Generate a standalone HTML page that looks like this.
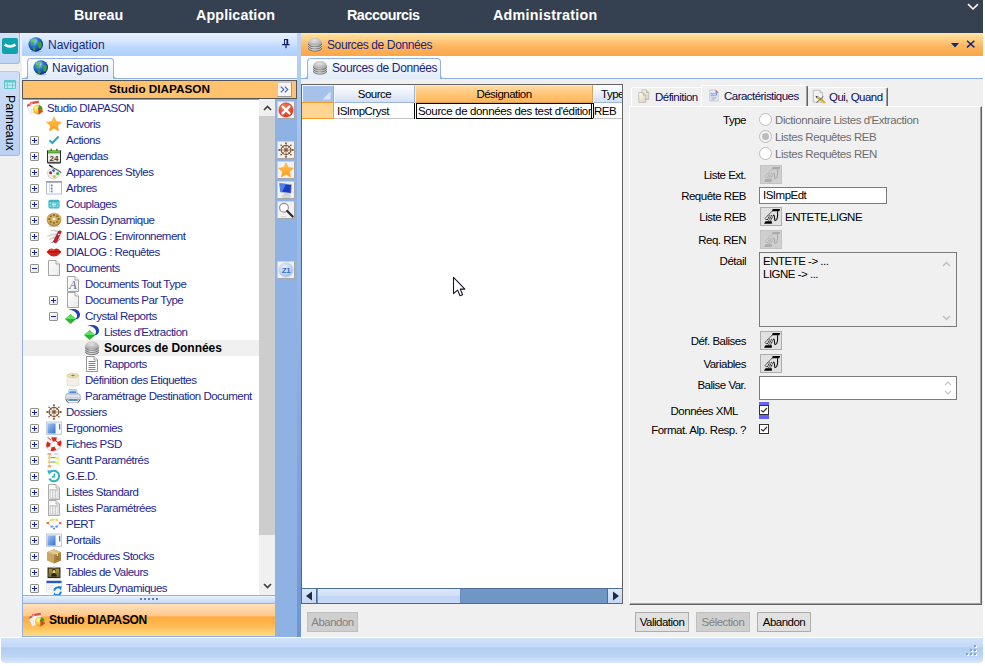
<!DOCTYPE html>
<html>
<head>
<meta charset="utf-8">
<title>Sources de Données</title>
<style>
*{box-sizing:border-box;margin:0;padding:0}
html,body{width:985px;height:666px;overflow:hidden;background:#fff;font-family:"Liberation Sans",sans-serif;font-size:11.5px;color:#000;letter-spacing:-.5px}
.abs{position:absolute}
svg{overflow:visible}
#win{left:0;top:0;width:983px;height:637px;background:#f0f0f0;overflow:hidden}
#top{left:0;top:0;width:983px;height:33px;background:#354050}
#top .m{position:absolute;top:6px;color:#fff;font-weight:bold;font-size:14.3px;line-height:18px;white-space:nowrap;letter-spacing:0}
#ls1{left:0;top:33px;width:20px;height:31px;background:linear-gradient(#d3e2f9,#bcd3f4);border-right:1px solid #a9bbd6;border-bottom:1px solid #a9bbd6;border-radius:0 0 3px 0}
#ls2{left:0;top:71px;width:20px;height:85px;background:linear-gradient(#cfe0f8,#b9d1f3);border-right:1px solid #a9bbd6;border-top:1px solid #b9c9e0;border-bottom:1px solid #a9bbd6;border-radius:0 3px 3px 0}
#pan{left:-17.5px;top:114px;width:54px;height:16px;transform:rotate(90deg);font-size:12.4px;line-height:16px;color:#000;white-space:nowrap;letter-spacing:0}
#navhead{left:22px;top:33px;width:275px;height:23px;background:linear-gradient(#e8f1ff 0%,#d6e6fd 35%,#bdd8fd 62%,#afd0fe 100%)}
.ttl{position:absolute;font-size:12px;color:#15287d;white-space:nowrap;line-height:16px;letter-spacing:-.38px}
#navtabs{left:22px;top:56px;width:275px;height:23px;background:#fff;border-bottom:1px solid #8fb0e8}
.tab{position:absolute;top:2px;height:21px;border:1px solid #8fb0e8;border-bottom:none;border-radius:4px 4px 0 0;background:linear-gradient(#fcfdff,#e1ebfa)}
.fl,.fr{position:absolute;bottom:0;width:4px;height:4px;border-bottom:1px solid #8fb0e8}.fl{left:-4px;border-right:1px solid #8fb0e8;border-bottom-right-radius:4px}.fr{right:-4px;border-left:1px solid #8fb0e8;border-bottom-left-radius:4px}
#stuhead{left:22px;top:80px;width:275px;height:19px;background:#ffc26e;border:1px solid #555;font-weight:bold;font-size:11.75px;line-height:16px;text-align:center;letter-spacing:0}
#tree{left:22px;top:99px;width:237px;height:496px;background:#fff;border-left:1px solid #8fb0e8;border-top:1px solid #7aa5e6;overflow:hidden}
.r{position:absolute;left:0;height:16px;line-height:16px;white-space:nowrap;color:#1a2690;}
.ex{position:absolute;width:9px;height:9px;border:1px solid #919191;background:linear-gradient(135deg,#fff,#e4e4e4);border-radius:1px}
.ex:before{content:"";position:absolute;left:1px;top:3px;width:5px;height:1px;background:#1a2690}
.ex.p:after{content:"";position:absolute;left:3px;top:1px;width:1px;height:5px;background:#1a2690}
#sb{left:259px;top:99px;width:16px;height:496px;background:#f0f0f0}
#thumb{left:0;top:17px;width:16px;height:419px;background:#cdcdcd}
#vbar{left:275px;top:99px;width:22px;height:538px;background:#8db2e3}
.tb{position:absolute;left:2px;width:18px;height:18px;background:#f1f1f1;border:1px solid #d0d0d0;border-right-color:#a6a6a6;border-bottom-color:#a6a6a6}
#split{left:297px;top:33px;width:4px;height:604px;background:linear-gradient(#bdd4f5 0%,#a9c7f0 12%,#8fb3e5 50%,#6e94d2 100%)}
#grip{left:22px;top:595px;width:253px;height:9px;background:linear-gradient(#eaf1fd,#c4d8f6);border:1px solid #8fb0e8;border-width:1px 0 1px 1px}
#navbot{left:22px;top:604px;width:253px;height:33px;background:linear-gradient(#ffe0ba 0%,#ffc98c 36%,#ffa93c 41%,#ffbd58 70%,#ffdc82 100%);border-left:1px solid #8fb0e8;border-bottom:1px solid #8fb0e8;font-weight:bold;font-size:12px}
#mainhead{left:301px;top:33px;width:682px;height:23px;background:linear-gradient(#fff0b0 0%,#ffe09c 7%,#fec97c 35%,#fdb660 58%,#fba548 100%)}
#maintabs{left:301px;top:56px;width:682px;height:23px;background:#fff;border-bottom:1px solid #8fb0e8}
#grid{left:301px;top:84px;width:322px;height:520px;background:#fff;border:1px solid #646464;overflow:hidden}
.gh{position:absolute;top:0;height:18px;line-height:16px;border-top:1px solid #f4f8fd;border-left:1px solid #f4f8fd;text-align:center;border-right:1px solid #9eb6d8;border-bottom:1px solid #9eb6d8;background:linear-gradient(#fbfcfe 0%,#e9eff9 50%,#d3e0f4 100%);white-space:nowrap;overflow:hidden}
.gc{position:absolute;top:18px;height:16px;line-height:16px;white-space:nowrap;overflow:hidden;border-right:1px solid #c4c4c4;border-bottom:1px solid #c4c4c4;padding-left:2px}
#hs{left:0;top:503px;width:320px;height:15px;background:#7096c3;border-top:1px solid #4f6d99}
.lab{position:absolute;right:0;white-space:nowrap;line-height:14px}
.btn{position:absolute;height:20px;border:1px solid #adadad;background:#e1e1e1;text-align:center;line-height:18px}
.btn.d{background:#cfcfcf;border-color:#bfbfbf;color:#838383}
.ib{position:absolute;left:760px;width:22px;height:19px;border:1px solid #adadad;background:#e1e1e1;color:#000}
.ib.d{background:#cfcfcf;border-color:#c3c3c3;color:#a9a9a9}
.rd{position:absolute;left:759px;width:13px;height:13px;border-radius:50%;border:1px solid #bcbcbc;background:#fff}
.rl{position:absolute;left:775px;color:#6d6d6d;white-space:nowrap;line-height:14px;letter-spacing:-.42px}
#status{left:1px;top:638px;width:982px;height:25px;background:linear-gradient(#d2e2fa 0%,#c3d9f7 34%,#b1cdf2 40%,#bdd5f5 72%,#d8e6fb 100%);border-radius:0 0 4px 4px}
.ptab{position:absolute;line-height:14px;white-space:nowrap;letter-spacing:-.53px;color:#0d0d50}
</style>
</head>
<body>
<svg width="0" height="0" style="position:absolute;left:-10px;top:-10px">
<symbol id="i-studio" viewBox="0 0 16 16"><defs><radialGradient id="gsb" cx=".35" cy=".3" r=".8"><stop offset="0" stop-color="#fff6a8"/><stop offset=".5" stop-color="#f7cf2a"/><stop offset="1" stop-color="#e79a12"/></radialGradient></defs><g transform="rotate(-24 5 8)"><rect x="1" y="3" width="8" height="10" fill="#fbfbfb" stroke="#d4d4d4" stroke-width=".5"/><rect x="1" y="3" width="8" height="2.2" fill="#e9564e"/></g><g transform="rotate(-10 8 7)"><rect x="4" y="1.4" width="8.6" height="11" fill="#fdfdfd" stroke="#cfcfcf" stroke-width=".5"/><rect x="4" y="1.4" width="8.6" height="2.4" fill="#e5453d"/><rect x="5" y="2.2" width="1.2" height="1" fill="#fff"/></g><circle cx="10.8" cy="9.6" r="4.6" fill="url(#gsb)" stroke="#d9941a" stroke-width=".4"/><path d="M10.8 9.6 L12.2 5.2 A4.6 4.6 0 0 1 15.4 9.6 Z" fill="#2f9f2d"/><path d="M11.4 8.4 L16 11.2 L11.8 14.2 Z" fill="#e8402c" stroke="#c23020" stroke-width=".3"/></symbol>
<symbol id="i-star" viewBox="0 0 16 16"><defs><linearGradient id="gst" x1="0" y1="0" x2="0" y2="1"><stop offset="0" stop-color="#ffc64a"/><stop offset="1" stop-color="#ff9a1a"/></linearGradient></defs><path d="M8 .8 L10.2 5.6 L15.4 6.2 L11.5 9.8 L12.6 15 L8 12.3 L3.4 15 L4.5 9.8 L.6 6.2 L5.8 5.6 Z" fill="url(#gst)" stroke="#f0a63a" stroke-width=".6" stroke-linejoin="round"/></symbol>
<symbol id="i-check" viewBox="0 0 16 16"><path d="M3.4 8.2 L6.4 11 L12.6 4.6" fill="none" stroke="#2fa9ba" stroke-width="2.2"/></symbol>
<symbol id="i-cal" viewBox="0 0 16 16"><rect x="1.5" y="2" width="13" height="13" fill="#ececec"/><rect x="1.5" y="2" width="13" height="3.4" fill="#5aa83a"/><rect x="2.2" y="2.6" width="11.6" height=".8" fill="#9ad07e"/><path d="M1.5 2.4 V15 H14.5 V2.4" fill="none" stroke="#2e2e2e" stroke-width="1"/><rect x="1.5" y="13.8" width="13" height="1.4" fill="#4a4a4a"/><rect x="4.6" y=".6" width="1" height="2.4" fill="#333"/><rect x="10.4" y=".6" width="1" height="2.4" fill="#333"/><text x="8" y="12.6" font-family="Liberation Sans" font-weight="bold" font-size="8" text-anchor="middle" fill="#3e3e3e" letter-spacing="0">24</text></symbol>
<symbol id="i-palette" viewBox="0 0 16 16"><path d="M1.4 9.6 Q1 5.4 6 4.6 Q12 3.6 14.4 7.6 Q15.6 11 12 12.2 Q10.8 12.8 10.6 14 Q9 15.8 5.6 14.6 Q1.8 13.2 1.4 9.6 Z" fill="#efefef" stroke="#bdbdbd" stroke-width=".6"/><circle cx="4.6" cy="8.8" r="1.5" fill="#a4262c"/><circle cx="7.6" cy="6.6" r="1.4" fill="#2f62d0"/><circle cx="11.6" cy="9.6" r="1.5" fill="#36a838"/><circle cx="8.4" cy="12.4" r="1.5" fill="#e9c01f"/><circle cx="4.8" cy="12" r="1" fill="#fafafa" stroke="#cfcfcf" stroke-width=".3"/><path d="M3.2 1.2 L15.4 8.6" stroke="#3a3a3a" stroke-width=".9"/><path d="M3.2 1.2 L6.4 3.2" stroke="#222" stroke-width="1.4"/></symbol>
<symbol id="i-arbres" viewBox="0 0 16 16"><rect x=".5" y="1.5" width="15" height="12.5" fill="#fff" stroke="#b4bccb" stroke-width="1"/><rect x=".5" y="1.2" width="15" height="1.5" fill="#8a95aa"/><path d="M3.6 3.4 V12.6 M3.6 5.4 H5 M3.6 8.4 H5 M3.6 11.4 H5" stroke="#b9c6dc" stroke-width=".6" fill="none"/><g fill="#5b8fe0"><rect x="5" y="4.4" width="1.6" height="2"/><rect x="5" y="7.4" width="1.6" height="2"/><rect x="5" y="10.4" width="1.6" height="2"/></g></symbol>
<symbol id="i-coupl" viewBox="0 0 16 16"><rect x="2.4" y="3.8" width="11.2" height="8.6" rx="1.6" fill="#39b7c4"/><rect x="3.6" y="6.2" width="8.8" height="5" fill="#8fdde5"/><path d="M3.6 8.7 H12.4 M5.8 6.2 V11.2 M10.2 6.2 V11.2" stroke="#39b7c4" stroke-width=".9"/><path d="M5.8 8.7 H10.2" stroke="#e6fafc" stroke-width=".9"/></symbol>
<symbol id="i-cookie" viewBox="0 0 16 16"><ellipse cx="8" cy="14.3" rx="5.6" ry=".9" fill="#b9b9b9" opacity=".6"/><ellipse cx="8" cy="8.6" rx="7.1" ry="5.9" fill="#b08a3a"/><ellipse cx="8" cy="7" rx="7.1" ry="5.9" fill="#d2ae5e" stroke="#b99544" stroke-width=".5"/><g fill="#8f6a24"><rect x="7" y="2.2" width="2" height="1.8" rx=".5"/><rect x="7" y="10" width="2" height="1.8" rx=".5"/><rect x="2.4" y="6.1" width="2" height="1.8" rx=".5"/><rect x="11.6" y="6.1" width="2" height="1.8" rx=".5"/><rect x="3.8" y="3.3" width="2" height="1.7" rx=".5"/><rect x="10.2" y="3.3" width="2" height="1.7" rx=".5"/><rect x="3.8" y="9" width="2" height="1.7" rx=".5"/><rect x="10.2" y="9" width="2" height="1.7" rx=".5"/></g><ellipse cx="8" cy="7" rx="1.5" ry="1.3" fill="#fff"/></symbol>
<symbol id="i-knife" viewBox="0 0 16 16"><path d="M13 3.4 Q7 1 4.6 2.6 Q8 2.4 12.4 4.6 Z" fill="#dcdcdc" stroke="#a9a9a9" stroke-width=".35"/><path d="M11.6 5.6 Q6 4.6 1 8.6 Q6 6.6 11 7.2 Z" fill="#e4e4e4" stroke="#a2a2a2" stroke-width=".35"/><path d="M10.6 8 Q6 9 3.4 11.6 Q7 10.4 10 10 Z" fill="#d0d0d0" stroke="#9a9a9a" stroke-width=".35"/><path d="M8.8 11.4 L5 15 L6.2 15.2 L9.6 12.6 Z" fill="#8a8a8a"/><path d="M7.4 13.6 L12.6 3 Q14.6 2 15.4 3.8 L10.6 14.6 Q8.4 15.8 7.4 13.6 Z" fill="#c81e2a" stroke="#8a0f18" stroke-width=".5"/><path d="M12.8 5.6 V7.4 M11.9 6.5 H13.7" stroke="#fff" stroke-width=".7"/><path d="M11 13.8 L14.4 10.6" stroke="#777" stroke-width=".8"/></symbol>
<symbol id="i-lips" viewBox="0 0 16 16"><path d="M.8 8 Q3.5 4.2 6 4.6 Q8 5.6 8 5.6 Q8 5.6 10 4.6 Q12.5 4.2 15.2 8 Q12 12.6 8 12.6 Q4 12.6 .8 8 Z" fill="#d3211c"/><path d="M.8 8 Q5 7 8 8 Q11 7 15.2 8" fill="none" stroke="#8c0f0c" stroke-width=".8"/><path d="M4 6.2 Q6 5.4 7.4 6.4" stroke="#f07a70" stroke-width=".8" fill="none"/></symbol>
<symbol id="i-doc" viewBox="0 0 16 16"><defs><linearGradient id="gdoc" x1="0" y1="0" x2="1" y2="1"><stop offset="0" stop-color="#fff"/><stop offset="1" stop-color="#e9e9e9"/></linearGradient></defs><path d="M2.5 .5 H10 L13.5 4 V15.5 H2.5 Z" fill="url(#gdoc)" stroke="#9a9a9a" stroke-width=".9"/><path d="M10 .5 V4 H13.5" fill="#f4f4f4" stroke="#9a9a9a" stroke-width=".8"/></symbol>
<symbol id="i-docA" viewBox="0 0 16 16"><defs><linearGradient id="gdocA" x1="0" y1="0" x2="1" y2="1"><stop offset="0" stop-color="#fff"/><stop offset="1" stop-color="#e9e9e9"/></linearGradient></defs><path d="M2.5 .5 H10 L13.5 4 V15.5 H2.5 Z" fill="url(#gdocA)" stroke="#9a9a9a" stroke-width=".9"/><path d="M10 .5 V4 H13.5" fill="#f4f4f4" stroke="#9a9a9a" stroke-width=".8"/><text x="7.6" y="13.3" font-family="Liberation Serif" font-style="italic" font-size="12" text-anchor="middle" fill="#5a6a96">A</text></symbol>
<symbol id="i-crystal" viewBox="0 0 16 16"><path d="M3 1.6 Q13.6 -.6 15 6 Q15.4 10.6 10.2 11.6 Q13.2 8.4 11.4 5.4 Q9.4 2.4 3 1.6 Z" fill="#1f3fb4"/><path d="M5.6 6.4 L10.8 11 L5.6 15.8 L.4 11 Z" fill="#22b428" stroke="#178a1c" stroke-width=".4"/><path d="M5.6 6.4 L10.8 11 L.4 11 Z" fill="#5fe463"/><path d="M5.6 6.4 L5.6 15.8" stroke="#3fd044" stroke-width=".5"/></symbol>
<symbol id="i-db" viewBox="0 0 16 16"><defs><linearGradient id="gdb" x1="0" y1="0" x2="1" y2="0"><stop offset="0" stop-color="#8a8a8a"/><stop offset=".45" stop-color="#d9d9d9"/><stop offset="1" stop-color="#858585"/></linearGradient><radialGradient id="gdb2" cx=".45" cy=".35" r=".7"><stop offset="0" stop-color="#e4e4e4"/><stop offset="1" stop-color="#a6a6a6"/></radialGradient></defs><path d="M.4 5 V12.4 A7.6 3.2 0 0 0 15.6 12.4 V5 Z" fill="url(#gdb)"/><path d="M.4 5.6 A7.6 5 0 0 1 15.6 5.6 A7.6 3.4 0 0 1 .4 5.6 Z" fill="url(#gdb2)"/><path d="M.4 7.6 A7.6 3.2 0 0 0 15.6 7.6 M.4 10 A7.6 3.2 0 0 0 15.6 10 M.4 12.4 A7.6 3.2 0 0 0 15.6 12.4" fill="none" stroke="#5f5f5f" stroke-width=".9"/><path d="M.4 8.5 A7.6 3.2 0 0 0 15.6 8.5 M.4 10.9 A7.6 3.2 0 0 0 15.6 10.9" fill="none" stroke="#ededed" stroke-width=".6"/></symbol>
<symbol id="i-report" viewBox="0 0 16 16"><path d="M2.5 .5 H10 L13.5 4 V15.5 H2.5 Z" fill="#fff" stroke="#8a8a8a" stroke-width=".9"/><path d="M10 .5 V4 H13.5" fill="#eee" stroke="#8a8a8a" stroke-width=".8"/><path d="M4.5 5.5 H11.5 M4.5 7.5 H11.5 M4.5 9.5 H11.5 M4.5 11.5 H11.5 M4.5 13.5 H11.5" stroke="#777" stroke-width=".9"/></symbol>
<symbol id="i-roll" viewBox="0 0 16 16"><path d="M2 3.5 V13 Q8 16 14 13 V3.5 Z" fill="#f1efe6" stroke="#d9d6c6" stroke-width=".5"/><ellipse cx="8" cy="3.5" rx="6" ry="2.3" fill="#e9dfae" stroke="#cfc48a" stroke-width=".5"/><ellipse cx="8" cy="3.5" rx="1.8" ry=".7" fill="#8a7b3c"/></symbol>
<symbol id="i-printer" viewBox="0 0 16 16"><path d="M4 1.5 H11.5 L12.5 6 H3 Z" fill="#fff" stroke="#7aa6dd" stroke-width=".6"/><path d="M4.6 3.2 H11 M4.3 4.6 H11.4" stroke="#3b7bd6" stroke-width="1"/><path d="M.8 7.5 Q.8 6 2.5 6 H13.5 Q15.2 6 15.2 7.5 V11.5 H.8 Z" fill="#dfe6ee" stroke="#7d8894" stroke-width=".6"/><rect x="3" y="10" width="10" height="4.8" fill="#fff" stroke="#8b95a1" stroke-width=".6"/><path d="M3.5 12 H12.5" stroke="#2f6fd0" stroke-width="1.6"/><path d="M.8 11.5 L3 14.5 M15.2 11.5 L13 14.5" stroke="#555" stroke-width="1"/></symbol>
<symbol id="i-wheel" viewBox="0 0 16 16"><g stroke="#7a4a22" fill="none"><ellipse cx="8" cy="8" rx="4.9" ry="4.5" stroke-width="1.1"/><path d="M8 1 V15 M1.2 8 H14.8 M3.2 3.4 L12.8 12.6 M12.8 3.4 L3.2 12.6" stroke-width=".65"/><ellipse cx="8" cy="8" rx="1.5" ry="1.4" fill="#8a5a30" stroke-width=".3"/></g><g fill="#7a4a22"><circle cx="8" cy="1.1" r=".95"/><circle cx="8" cy="14.9" r=".95"/><circle cx="1.2" cy="8" r=".95"/><circle cx="14.8" cy="8" r=".95"/><circle cx="3.1" cy="3.3" r=".8"/><circle cx="12.9" cy="3.3" r=".8"/><circle cx="3.1" cy="12.7" r=".8"/><circle cx="12.9" cy="12.7" r=".8"/></g></symbol>
<symbol id="i-ergo" viewBox="0 0 16 16"><defs><linearGradient id="ger" x1="0" y1="0" x2="1" y2="1"><stop offset="0" stop-color="#a9c9f2"/><stop offset="1" stop-color="#2d6fd2"/></linearGradient></defs><rect x=".5" y="2" width="15" height="12.5" fill="#e7edf6" stroke="#b9c3d1" stroke-width=".8"/><rect x="1.5" y="3.5" width="8" height="10" fill="url(#ger)"/><rect x="10" y="3.5" width="4.8" height="10" fill="#f7f9fc"/><rect x="13" y="4" width="1.2" height="5.5" fill="#3a78d8"/></symbol>
<symbol id="i-buoy" viewBox="0 0 16 16"><g transform="rotate(-28 8 8.4)"><ellipse cx="8" cy="8.4" rx="5.9" ry="4.6" fill="none" stroke="#bdbdbd" stroke-width="4.4"/><ellipse cx="8" cy="8" rx="5.9" ry="4.6" fill="none" stroke="#f6f6f6" stroke-width="3.8"/><g stroke="#dc241f" stroke-width="3.8" fill="none"><path d="M2.1 8 A5.9 4.6 0 0 1 4.4 4.4"/><path d="M8.6 3.4 A5.9 4.6 0 0 1 12.6 5"/><path d="M13.9 8 A5.9 4.6 0 0 1 11.6 11.6"/><path d="M7.4 12.6 A5.9 4.6 0 0 1 3.4 11"/></g></g><path d="M1.6 1.2 L5 4.2 M5.4 1 L11.8 6.4" stroke="#dc241f" stroke-width="1"/></symbol>
<symbol id="i-gantt" viewBox="0 0 16 16"><rect x="1" y="1" width="14" height="14" fill="#fbfbf6"/><rect x="1.5" y="1" width="3.6" height="2" fill="#f2a97d"/><rect x="8" y="1" width="4.6" height="1.6" fill="#c9d9f4"/><rect x="2" y="4.6" width="3" height="2" fill="#f6c58f"/><rect x="9.6" y="4.8" width="3.4" height="3" fill="#eef07a"/><path d="M5 5.6 H9.6" stroke="#3fae3b" stroke-width=".9"/><rect x="2" y="9" width="3" height="2" fill="#f6c58f"/><rect x="9.6" y="9.4" width="3.4" height="3" fill="#eef07a"/><path d="M5 10 H9.6" stroke="#3fae3b" stroke-width=".9"/><rect x="1.6" y="13" width="3.8" height="2.4" rx="1" fill="#f2a97d"/><path d="M3.5 3 V13" stroke="#e7b78f" stroke-width=".6"/></symbol>
<symbol id="i-ged" viewBox="0 0 16 16"><path d="M4 4.4 A5.3 5.3 0 1 1 3.2 10.6" fill="none" stroke="#2fb2bd" stroke-width="2"/><path d="M1.2 2.2 L6.6 2.6 L3 6.8 Z" fill="#2fb2bd"/><path d="M8.3 5.4 V8.8 H5.8" fill="none" stroke="#2fb2bd" stroke-width="1.5"/></symbol>
<symbol id="i-list" viewBox="0 0 16 16"><path d="M2.5 .5 H10 L13.5 4 V15.5 H2.5 Z" fill="#fafafa" stroke="#a3a3a3" stroke-width=".9"/><path d="M10 .5 V4 H13.5" fill="#ececec" stroke="#a3a3a3" stroke-width=".8"/><rect x="4" y="5.4" width="8" height="8.8" fill="#f2f2f2" stroke="#b9b9b9" stroke-width=".7"/><path d="M6.7 5.4 V14.2 M9.4 5.4 V14.2" stroke="#b9b9b9" stroke-width=".8"/><rect x="4" y="5.4" width="8" height="1.5" fill="#cfcfcf"/></symbol>
<symbol id="i-pert" viewBox="0 0 16 16"><g fill="none" stroke="#7aa4e0" stroke-width=".9" stroke-dasharray="1.2 1"><path d="M2 7 L5.5 3.8 L10.5 3.8 L14 7 L10.5 10.6 L5.5 10.6 Z"/></g><rect x="4.4" y="2.6" width="2.6" height="2.4" fill="#f4d75e"/><rect x="9.4" y="2.6" width="2.6" height="2.4" fill="#f4d75e"/><rect x=".6" y="6" width="2.4" height="2.2" fill="#ee6a4a"/><rect x="13" y="6" width="2.4" height="2.2" fill="#ee6a4a"/><rect x="4.6" y="9.6" width="2.2" height="2" fill="#5b93de"/><rect x="9.6" y="9.6" width="2.2" height="2" fill="#5b93de"/><rect x="7.2" y="11.8" width="1.8" height="1.6" fill="#3f7bd0"/></symbol>
<symbol id="i-box" viewBox="0 0 16 16"><path d="M1 4.2 L8 1.2 L15 4.2 V12.6 L8 15.6 L1 12.6 Z" fill="#c9a462"/><path d="M1 4.2 L8 7 L15 4.2 L8 1.2 Z" fill="#dbbd82"/><path d="M8 7 V15.6 L15 12.6 V4.2 Z" fill="#a98445"/><path d="M4.2 2.8 L11.4 5.7 V8" fill="none" stroke="#e9d3a3" stroke-width="1.2"/><circle cx="11.6" cy="10" r="1.6" fill="none" stroke="#8c6529" stroke-width=".6"/></symbol>
<symbol id="i-mona" viewBox="0 0 16 16"><rect x="1.5" y="3.5" width="13" height="10.6" fill="#2e2a22"/><rect x="2.7" y="4.6" width="10.6" height="8" fill="#a08a30"/><path d="M2.7 9 Q5 7.6 6 9.4 V12.6 H2.7 Z M13.3 8.6 Q11 7.8 10.2 9.6 V12.6 H13.3 Z" fill="#6f7a3a"/><path d="M5.2 12.6 Q5.2 9 8 9 Q10.8 9 10.8 12.6 Z" fill="#2a2114"/><ellipse cx="8" cy="7.4" rx="1.5" ry="1.8" fill="#e9c98f"/><path d="M6 8.4 Q5.7 5 8 5 Q10.3 5 10 8.4 Q9.6 6 8 6 Q6.4 6 6 8.4Z" fill="#2a1d10"/><rect x="6.4" y="2.3" width="3.2" height="1.4" fill="#cfcfcf"/><path d="M2 14.8 H14" stroke="#d9d9d9" stroke-width=".6"/></symbol>
<symbol id="i-tabl" viewBox="0 0 16 16"><rect x=".5" y="1" width="15" height="11" fill="#fff" stroke="#d6dbe3" stroke-width=".6"/><rect x=".5" y=".8" width="15" height="2.4" fill="#2458c4"/><path d="M1.4 5.4 H8 M1.4 7.4 H7.4 M1.4 9.4 H6.6" stroke="#d3d8e0" stroke-width=".8"/><path d="M8.2 10.8 A3.5 3.5 0 0 1 13.6 8" fill="none" stroke="#1579e6" stroke-width="1.9"/><path d="M12 6 L15.8 6.6 L14.6 10.4 Z" fill="#1579e6"/><path d="M14.8 11.8 A3.5 3.5 0 0 1 9.4 14.6" fill="none" stroke="#1579e6" stroke-width="1.9"/><path d="M11 16.6 L7.2 16 L8.4 12.2 Z" fill="#1579e6"/></symbol>
<symbol id="i-globe" viewBox="0 0 16 16"><defs><radialGradient id="ggl" cx=".38" cy=".3" r=".75"><stop offset="0" stop-color="#9fd8ff"/><stop offset=".45" stop-color="#2a6fd6"/><stop offset="1" stop-color="#0a2674"/></radialGradient></defs><ellipse cx="8.6" cy="14.9" rx="5.6" ry="1" fill="#8e9cb5" opacity=".55"/><circle cx="8" cy="7.7" r="7.5" fill="url(#ggl)"/><path d="M2.8 3.4 Q4.8 1.2 7.4 1.6 Q8.8 3.4 7 5 Q6.6 7.6 4.2 8 Q2 6.6 2.8 3.4 Z" fill="#3fae47"/><path d="M10 5.4 Q12.8 4.2 14.4 6.6 Q14.8 10.2 12.4 12.2 Q10.2 11.4 10.6 8.8 Q9.4 7 10 5.4 Z" fill="#38a441"/><path d="M4.8 10.2 Q7.4 9.8 8 12 Q7.6 14.4 5.8 14.2 Q4.4 12.4 4.8 10.2 Z" fill="#2f9a3a"/><ellipse cx="6" cy="3.6" rx="3.4" ry="1.8" fill="#fff" opacity=".25"/></symbol>
<symbol id="i-xred" viewBox="0 0 16 16"><defs><radialGradient id="gxr" cx=".4" cy=".3" r=".8"><stop offset="0" stop-color="#f77a5a"/><stop offset="1" stop-color="#d8321a"/></radialGradient></defs><circle cx="8" cy="8" r="7.2" fill="url(#gxr)" stroke="#c9331f" stroke-width=".5"/><path d="M4.6 4.6 L11.4 11.4 M11.4 4.6 L4.6 11.4" stroke="#fff" stroke-width="2.4" stroke-linecap="round"/></symbol>
<symbol id="i-monitor" viewBox="0 0 16 16"><path d="M1.5 1.2 L13.6 2.6 L13 11.4 L2.4 10 Z" fill="#1c3fc0" stroke="#b9c3d6" stroke-width=".7"/><path d="M1.5 1.2 L8 2 L4 10.2 L2.4 10 Z" fill="#4f7ee8"/><path d="M6.4 11.2 L10.4 11.6 L10.8 13.4 H5.6 Z" fill="#c9cfd9"/><ellipse cx="8.4" cy="14.2" rx="4.6" ry="1.3" fill="#d9dde4" stroke="#aab1bd" stroke-width=".4"/></symbol>
<symbol id="i-mag" viewBox="0 0 16 16"><circle cx="6" cy="5.8" r="4.4" fill="#fbfdff" stroke="#8e8e8e" stroke-width="1.1"/><path d="M9.2 9 L14.6 14.6" stroke="#2b2b2b" stroke-width="2.2" stroke-linecap="round"/><path d="M3 14.8 H8" stroke="#c9c9c9" stroke-width=".8"/></symbol>
<symbol id="i-z1" viewBox="0 0 16 16"><defs><radialGradient id="gz1" cx=".4" cy=".3" r=".8"><stop offset="0" stop-color="#eaf1fc"/><stop offset="1" stop-color="#9cb9e8"/></radialGradient></defs><circle cx="8" cy="8" r="7.2" fill="url(#gz1)" stroke="#b9cdee" stroke-width=".6"/><text x="8" y="11" font-family="Liberation Sans" font-weight="bold" font-size="8" text-anchor="middle" fill="#3f6fc6">Z1</text></symbol>
<symbol id="i-hand" viewBox="0 0 20 17"><path d="M11.7 1 H19.2 L18.3 3.2 H11 Z" fill="currentColor"/><path d="M4.5 13.3 H10.9 V15.7 H3 Z" fill="currentColor"/><path d="M11 3.3 L4.1 10.4 L5 11.6 H6.8" stroke="currentColor" stroke-width=".95" fill="none" stroke-dasharray="1.3 .45"/><path d="M10.6 7.2 L7.4 13.3 M8.8 7.4 L6.6 11.6" stroke="currentColor" stroke-width=".9" fill="none" stroke-dasharray="1.2 .5"/><path d="M12.7 6.8 L9.2 13.3" stroke="currentColor" stroke-width=".95" fill="none" stroke-dasharray="1.3 .45"/><path d="M16.6 3.3 V8 L15.7 11.8 L13.8 12.6 L13.4 8.2 L12.7 6.8" stroke="currentColor" stroke-width="1" fill="none"/></symbol>
<symbol id="i-docs2" viewBox="0 0 16 16"><defs><linearGradient id="gd2" x1="0" y1="0" x2="1" y2="1"><stop offset="0" stop-color="#fbf8f1"/><stop offset="1" stop-color="#ddd5c4"/></linearGradient></defs><path d="M5.5 1 H10.5 L13.5 4 V12 H5.5 Z" fill="url(#gd2)" stroke="#aea796" stroke-width=".7"/><path d="M10.5 1 V4 H13.5" fill="#d6cfbf" stroke="#aea796" stroke-width=".6"/><path d="M2 4 H7 L10 7 V15.3 H2 Z" fill="url(#gd2)" stroke="#aea796" stroke-width=".7"/><path d="M7 4 V7 H10" fill="#d6cfbf" stroke="#aea796" stroke-width=".6"/></symbol>
<symbol id="i-xml" viewBox="0 0 16 16"><path d="M2.5 .8 H10.4 L13.5 4 V15.2 H2.5 Z" fill="#f2f5fa" stroke="#9fa9b9" stroke-width=".8"/><path d="M10.4 .8 V4 H13.5" fill="#d9534a" stroke="#b4453d" stroke-width=".5"/><rect x="3.6" y="4.4" width="8.4" height="4.6" fill="#6f9be0"/><path d="M4.4 5.4 L6 8 M6 5.4 L4.4 8 M7 8 V5.4 L8 6.8 L9 5.4 V8 M10 5.4 V8 H11.4" stroke="#fff" stroke-width=".7" fill="none"/><path d="M4.4 10.6 H11.4 M4.4 12.2 H11.4 M4.4 13.6 H9" stroke="#8a96aa" stroke-width=".7"/></symbol>
<symbol id="i-pencil" viewBox="0 0 16 16"><path d="M1.5 .8 H9 L12 3.8 V14.5 H1.5 Z" fill="#f2f2f2" stroke="#a9a9a9" stroke-width=".8"/><path d="M9 .8 V3.8 H12" fill="#e2e2e2" stroke="#a9a9a9" stroke-width=".6"/><path d="M5.5 8.5 L14.6 15.4" stroke="#e0b12a" stroke-width="2.2"/><path d="M5.5 8.5 L14.6 15.4" stroke="#8a6a12" stroke-width=".5" transform="translate(.7 -.9)"/><path d="M4 7.2 L6.6 8 L5 9.8 Z" fill="#333"/><path d="M5 15 L13 8" stroke="#4b4b4b" stroke-width="1"/></symbol>
<symbol id="i-pin" viewBox="0 0 8 9.4"><path d="M2 0 H6.2 V5 H7.6 V6.3 H4.6 V9.2 H3.4 V6.3 H.2 V5 H2 Z M3 1 V5 H4.4 V1 Z" fill="#0c1f6e" fill-rule="evenodd"/></symbol>
<symbol id="i-panel" viewBox="0 0 12 9"><rect x="0" y="0" width="12" height="9" rx="1" fill="#63c7cf"/><rect x="1" y="2.6" width="10" height="5.4" fill="#bfeaee"/><path d="M1 5.2 H11 M3.4 2.6 V8 M8.6 2.6 V8" stroke="#63c7cf" stroke-width=".8"/></symbol>
</svg>
<div id="win" class="abs">
<div id="top" class="abs"><div class="m" style="left:74px">Bureau</div><div class="m" style="left:196px;letter-spacing:.12px">Application</div><div class="m" style="left:347px;letter-spacing:-.45px">Raccourcis</div><div class="m" style="left:493px;letter-spacing:.25px">Administration</div><svg class="abs" style="left:967px;top:3px" width="12" height="8"><path d="M1 1.2 L6 6 L11 1.2" fill="none" stroke="#fff" stroke-width="1.6"/></svg></div>
<div id="ls1" class="abs"><div class="abs" style="left:2px;top:5px;width:16px;height:16px;background:#11a3ad;border-radius:2px"></div><svg class="abs" style="left:4px;top:10px" width="12" height="7"><path d="M.6 1.6 Q6 5.2 11.4 1.6" fill="none" stroke="#fff" stroke-width="2.6"/></svg></div>
<div id="ls2" class="abs"><svg class="abs" style="left:4px;top:8px" width="12" height="9"><use href="#i-panel"/></svg></div>
<div id="pan" class="abs">Panneaux</div>
<div id="navhead" class="abs"><svg class="abs" style="left:6px;top:4px" width="15.5" height="15.5"><use href="#i-globe"/></svg><div class="ttl" style="left:26px;top:4px;letter-spacing:0">Navigation</div><svg class="abs" style="left:260px;top:6px" width="8" height="9.4"><use href="#i-pin"/></svg></div>
<div id="navtabs" class="abs"><div class="tab" style="left:5px;width:87px"><div class="fl"></div><div class="fr"></div><svg class="abs" style="left:5px;top:1px" width="15.5" height="15.5"><use href="#i-globe"/></svg><div class="ttl" style="left:24px;top:1px;letter-spacing:0">Navigation</div></div></div>
<div id="stuhead" class="abs">Studio DIAPASON<div class="abs" style="left:254px;top:1px;width:15px;height:15px;background:#f4f4f4;border:1px solid #c9c9c9;border-right-color:#9a9a9a;border-bottom-color:#9a9a9a"><svg class="abs" style="left:2px;top:3px" width="9" height="7"><path d="M.8 .6 L3.8 3.5 L.8 6.4 M4.8 .6 L7.8 3.5 L4.8 6.4" fill="none" stroke="#4a63b8" stroke-width="1.1"/></svg></div></div>
<div id="tree" class="abs"><svg class="abs" style="left:4px;top:0px" width="16" height="16"><use href="#i-studio"/></svg>
<div class="r" style="left:24px;top:0px">Studio DIAPASON</div>
<svg class="abs" style="left:23px;top:16px" width="16" height="16"><use href="#i-star"/></svg>
<div class="r" style="left:43px;top:16px">Favoris</div>
<div class="ex p" style="left:7px;top:36px"></div>
<svg class="abs" style="left:23px;top:32px" width="16" height="16"><use href="#i-check"/></svg>
<div class="r" style="left:43px;top:32px">Actions</div>
<div class="ex p" style="left:7px;top:52px"></div>
<svg class="abs" style="left:23px;top:48px" width="16" height="16"><use href="#i-cal"/></svg>
<div class="r" style="left:43px;top:48px">Agendas</div>
<div class="ex p" style="left:7px;top:68px"></div>
<svg class="abs" style="left:23px;top:64px" width="16" height="16"><use href="#i-palette"/></svg>
<div class="r" style="left:43px;top:64px">Apparences Styles</div>
<div class="ex p" style="left:7px;top:84px"></div>
<svg class="abs" style="left:23px;top:80px" width="16" height="16"><use href="#i-arbres"/></svg>
<div class="r" style="left:43px;top:80px">Arbres</div>
<div class="ex p" style="left:7px;top:100px"></div>
<svg class="abs" style="left:23px;top:96px" width="16" height="16"><use href="#i-coupl"/></svg>
<div class="r" style="left:43px;top:96px">Couplages</div>
<div class="ex p" style="left:7px;top:116px"></div>
<svg class="abs" style="left:23px;top:112px" width="16" height="16"><use href="#i-cookie"/></svg>
<div class="r" style="left:43px;top:112px">Dessin Dynamique</div>
<div class="ex p" style="left:7px;top:132px"></div>
<svg class="abs" style="left:23px;top:128px" width="16" height="16"><use href="#i-knife"/></svg>
<div class="r" style="left:43px;top:128px">DIALOG : Environnement</div>
<div class="ex p" style="left:7px;top:148px"></div>
<svg class="abs" style="left:23px;top:144px" width="16" height="16"><use href="#i-lips"/></svg>
<div class="r" style="left:43px;top:144px">DIALOG : Requêtes</div>
<div class="ex" style="left:7px;top:164px"></div>
<svg class="abs" style="left:23px;top:160px" width="16" height="16"><use href="#i-doc"/></svg>
<div class="r" style="left:43px;top:160px">Documents</div>
<svg class="abs" style="left:42px;top:176px" width="16" height="16"><use href="#i-docA"/></svg>
<div class="r" style="left:62px;top:176px">Documents Tout Type</div>
<div class="ex p" style="left:26px;top:196px"></div>
<svg class="abs" style="left:42px;top:192px" width="16" height="16"><use href="#i-doc"/></svg>
<div class="r" style="left:62px;top:192px">Documents Par Type</div>
<div class="ex" style="left:26px;top:212px"></div>
<svg class="abs" style="left:42px;top:208px" width="16" height="16"><use href="#i-crystal"/></svg>
<div class="r" style="left:62px;top:208px">Crystal Reports</div>
<svg class="abs" style="left:61px;top:224px" width="16" height="16"><use href="#i-crystal"/></svg>
<div class="r" style="left:81px;top:224px">Listes d'Extraction</div>
<div class="abs" style="left:0;top:240px;width:236px;height:16px;background:#f0f0f0"></div>
<svg class="abs" style="left:62px;top:241px" width="14" height="14"><use href="#i-db"/></svg>
<div class="r" style="left:81px;top:240px;font-weight:bold;color:#000;font-size:12px;letter-spacing:-.05px">Sources de Données</div>
<svg class="abs" style="left:61px;top:256px" width="16" height="16"><use href="#i-report"/></svg>
<div class="r" style="left:81px;top:256px">Rapports</div>
<svg class="abs" style="left:42px;top:272px" width="16" height="16"><use href="#i-roll"/></svg>
<div class="r" style="left:62px;top:272px">Définition des Etiquettes</div>
<svg class="abs" style="left:42px;top:288px" width="16" height="16"><use href="#i-printer"/></svg>
<div class="r" style="left:62px;top:288px">Paramétrage Destination Document</div>
<div class="ex p" style="left:7px;top:308px"></div>
<svg class="abs" style="left:23px;top:304px" width="16" height="16"><use href="#i-wheel"/></svg>
<div class="r" style="left:43px;top:304px">Dossiers</div>
<div class="ex p" style="left:7px;top:324px"></div>
<svg class="abs" style="left:23px;top:320px" width="16" height="16"><use href="#i-ergo"/></svg>
<div class="r" style="left:43px;top:320px">Ergonomies</div>
<div class="ex p" style="left:7px;top:340px"></div>
<svg class="abs" style="left:23px;top:336px" width="16" height="16"><use href="#i-buoy"/></svg>
<div class="r" style="left:43px;top:336px">Fiches PSD</div>
<div class="ex p" style="left:7px;top:356px"></div>
<svg class="abs" style="left:23px;top:352px" width="16" height="16"><use href="#i-gantt"/></svg>
<div class="r" style="left:43px;top:352px">Gantt Paramétrés</div>
<div class="ex p" style="left:7px;top:372px"></div>
<svg class="abs" style="left:23px;top:368px" width="16" height="16"><use href="#i-ged"/></svg>
<div class="r" style="left:43px;top:368px">G.E.D.</div>
<div class="ex p" style="left:7px;top:388px"></div>
<svg class="abs" style="left:23px;top:384px" width="16" height="16"><use href="#i-list"/></svg>
<div class="r" style="left:43px;top:384px">Listes Standard</div>
<div class="ex p" style="left:7px;top:404px"></div>
<svg class="abs" style="left:23px;top:400px" width="16" height="16"><use href="#i-list"/></svg>
<div class="r" style="left:43px;top:400px">Listes Paramétrées</div>
<div class="ex p" style="left:7px;top:420px"></div>
<svg class="abs" style="left:23px;top:416px" width="16" height="16"><use href="#i-pert"/></svg>
<div class="r" style="left:43px;top:416px">PERT</div>
<div class="ex p" style="left:7px;top:436px"></div>
<svg class="abs" style="left:23px;top:432px" width="16" height="16"><use href="#i-ergo"/></svg>
<div class="r" style="left:43px;top:432px">Portails</div>
<div class="ex p" style="left:7px;top:452px"></div>
<svg class="abs" style="left:23px;top:448px" width="16" height="16"><use href="#i-box"/></svg>
<div class="r" style="left:43px;top:448px">Procédures Stocks</div>
<div class="ex p" style="left:7px;top:468px"></div>
<svg class="abs" style="left:23px;top:464px" width="16" height="16"><use href="#i-mona"/></svg>
<div class="r" style="left:43px;top:464px">Tables de Valeurs</div>
<div class="ex p" style="left:7px;top:484px"></div>
<svg class="abs" style="left:23px;top:480px" width="16" height="16"><use href="#i-tabl"/></svg>
<div class="r" style="left:43px;top:480px">Tableurs Dynamiques</div></div>
<div id="sb" class="abs"><svg class="abs" style="left:4px;top:6px" width="9" height="6"><path d="M1 5 L4.5 1.4 L8 5" fill="none" stroke="#404040" stroke-width="1.7"/></svg><div id="thumb" class="abs"></div><svg class="abs" style="left:4px;top:484px" width="9" height="6"><path d="M1 1 L4.5 4.6 L8 1" fill="none" stroke="#404040" stroke-width="1.7"/></svg></div>
<div id="vbar" class="abs">
<div class="tb" style="top:2px"><svg class="abs" style="left:0px;top:0px" width="16" height="16"><use href="#i-xred"/></svg></div>
<div class="tb" style="top:42px"><svg class="abs" style="left:0px;top:0px" width="16" height="16"><use href="#i-wheel"/></svg></div>
<div class="tb" style="top:62px"><svg class="abs" style="left:0px;top:0px" width="16" height="16"><use href="#i-star"/></svg></div>
<div class="tb" style="top:82px"><svg class="abs" style="left:0px;top:0px" width="16" height="16"><use href="#i-monitor"/></svg></div>
<div class="tb" style="top:102px"><svg class="abs" style="left:0px;top:0px" width="16" height="16"><use href="#i-mag"/></svg></div>
<div class="tb" style="top:162px"><svg class="abs" style="left:0px;top:0px" width="16" height="16"><use href="#i-z1"/></svg></div>
</div>
<div id="split" class="abs"></div>
<div id="grip" class="abs"><svg class="abs" style="left:116px;top:1px" width="22" height="4"><g fill="#5b7fc0"><rect x="1" y="1" width="2" height="2"/><rect x="5" y="1" width="2" height="2"/><rect x="9" y="1" width="2" height="2"/><rect x="13" y="1" width="2" height="2"/><rect x="17" y="1" width="2" height="2"/></g></svg></div>
<div id="navbot" class="abs"><svg class="abs" style="left:6px;top:8px" width="16" height="16"><use href="#i-studio"/></svg><div class="abs" style="left:26px;top:8px;line-height:16px;letter-spacing:-.35px">Studio DIAPASON</div></div>
<div id="mainhead" class="abs"><svg class="abs" style="left:7px;top:4px" width="14" height="15"><use href="#i-db"/></svg><div class="ttl" style="left:26px;top:4px">Sources de Données</div><svg class="abs" style="left:650px;top:10px" width="9" height="5"><path d="M0 0 H8 L4 4.4 Z" fill="#0f2a7a"/></svg><svg class="abs" style="left:665px;top:7px" width="10" height="9"><path d="M1 .8 L8.4 7.4 M8.4 .8 L1 7.4" stroke="#0f2a7a" stroke-width="1.5" fill="none"/></svg></div>
<div id="maintabs" class="abs"><div class="tab" style="left:6px;width:134px"><div class="fl"></div><div class="fr"></div><svg class="abs" style="left:5px;top:1px" width="14" height="15"><use href="#i-db"/></svg><div class="ttl" style="left:24px;top:1px">Sources de Données</div></div></div>
<div id="grid" class="abs">
<div class="gh" style="left:0;width:32px;background:#a6c2ea;border-right-color:#8fb0e0;border-bottom:none"><svg class="abs" style="left:19px;top:5px" width="9" height="9"><path d="M8.5 .5 V8.5 H.5 Z" fill="#d9e5f7"/></svg></div>
<div class="gh" style="left:32px;width:81px">Source</div>
<div class="gh" style="left:113px;width:178px;background:linear-gradient(#ffdba5 0%,#ffc778 50%,#ffb55a 100%);border-color:#ffe8c4 #d9a25a #d9a25a #ffe8c4">Désignation</div>
<div class="gh" style="left:291px;width:30px;text-align:left;padding-left:7px;border-right:none">Type</div>
<div class="gc" style="left:0;top:17px;height:17px;width:32px;background:#ffd591;border:1px solid #f59a2b;border-left:none"></div>
<div class="gc" style="left:32px;width:81px;padding-left:3px">ISImpCryst</div>
<div class="gc" style="left:112px;width:180px;border:1px solid #000;border-left:3px double #000;border-right:3px double #000;line-height:14px;padding-left:1px;letter-spacing:-.36px">Source de données des test d'édition</div>
<div class="gc" style="left:291px;width:30px;border-right:none;padding-left:1px">REB</div>
<div id="hs" class="abs"><div class="abs" style="left:0;top:0;width:15px;height:14px;background:linear-gradient(#dde8f9,#c4d7f4);border-right:1px solid #4f6d99"><svg class="abs" style="left:3px;top:2px" width="8" height="10"><path d="M7 .5 V9.5 L1 5 Z" fill="#1e2a44"/></svg></div><div class="abs" style="left:16px;top:0;width:143px;height:14px;background:linear-gradient(#dbe7fa 0%,#d2e1f8 45%,#c2d6f4 55%,#c6d9f6 100%);border-right:1px solid #6b8cc0"></div><div class="abs" style="left:305px;top:0;width:15px;height:14px;background:linear-gradient(#dde8f9,#c4d7f4);border-left:1px solid #4f6d99"><svg class="abs" style="left:4px;top:2px" width="8" height="10"><path d="M1 .5 V9.5 L7 5 Z" fill="#1e2a44"/></svg></div></div>
</div>
<div class="btn d" style="left:307px;top:612px;width:51px">Abandon</div>
<div class="abs" style="left:629px;top:106px;width:353px;height:499px;border:1px solid #fff;border-right:1px solid #636363;border-bottom:1px solid #636363;box-shadow:inset -1px -1px 0 #a0a0a0;background:#f0f0f0"></div>
<div class="abs" style="left:631px;top:87px;width:71px;height:19px;border:1px solid #fff;border-bottom:none;border-right:none;border-radius:2px 0 0 0"></div>
<div class="abs" style="left:701px;top:85px;width:107px;height:21px;border:1px solid #fff;border-bottom:none;border-right:1px solid #636363;box-shadow:inset -1px 0 0 #a0a0a0;background:#f0f0f0;border-radius:2px 2px 0 0"></div>
<div class="abs" style="left:808px;top:87px;width:80px;height:19px;border-top:1px solid #fff;border-right:1px solid #636363;box-shadow:inset -1px 0 0 #a0a0a0;border-radius:0 2px 0 0"></div>
<svg class="abs" style="left:637px;top:88px" width="14" height="16"><use href="#i-docs2"/></svg><div class="ptab" style="left:655px;top:90px">Définition</div>
<svg class="abs" style="left:708px;top:88px" width="12" height="15"><use href="#i-xml"/></svg><div class="ptab" style="left:724px;top:89px">Caractéristiques</div>
<svg class="abs" style="left:812px;top:89px" width="14" height="15"><use href="#i-pencil"/></svg><div class="ptab" style="left:829px;top:90px">Qui, Quand</div>
<div class="abs" style="left:640px;top:0;width:106px;height:0">
<div class="lab" style="top:113px">Type</div>
<div class="lab" style="top:168px">Liste Ext.</div>
<div class="lab" style="top:189px">Requête REB</div>
<div class="lab" style="top:210px">Liste REB</div>
<div class="lab" style="top:233px">Req. REN</div>
<div class="lab" style="top:254px">Détail</div>
<div class="lab" style="top:334px">Déf. Balises</div>
<div class="lab" style="top:357px">Variables</div>
<div class="lab" style="top:378px">Balise Var.</div>
<div class="lab" style="top:404px">Données XML&nbsp;&nbsp;&nbsp;</div>
<div class="lab" style="top:423px">Format. Alp. Resp. ?</div>
</div>
<div class="rd" style="top:113px"></div><div class="rl" style="top:113px">Dictionnaire Listes d'Extraction</div>
<div class="rd" style="top:130px;background:#f4f4f4"><div class="abs" style="left:2px;top:2px;width:7px;height:7px;border-radius:50%;background:#bcbcbc"></div></div><div class="rl" style="top:130px">Listes Requêtes REB</div>
<div class="rd" style="top:147px"></div><div class="rl" style="top:147px">Listes Requêtes REN</div>
<div class="ib d" style="top:165px"><svg class="abs" style="left:0;top:0" width="20" height="17"><use href="#i-hand"/></svg></div>
<div class="abs" style="left:759px;top:187px;width:128px;height:17px;background:#fff;border:1px solid #7a7a7a;line-height:15px;padding-left:3px">ISImpEdt</div>
<div class="ib" style="top:207px"><svg class="abs" style="left:0;top:0" width="20" height="17"><use href="#i-hand"/></svg></div>
<div class="abs" style="left:785px;top:210px;line-height:14px;white-space:nowrap">ENTETE,LIGNE</div>
<div class="ib d" style="top:230px"><svg class="abs" style="left:0;top:0" width="20" height="17"><use href="#i-hand"/></svg></div>
<div class="abs" style="left:759px;top:252px;width:198px;height:75px;border:1px solid #7a7a7a;background:#f0f0f0;line-height:13px;padding:2px 0 0 3px;white-space:nowrap">ENTETE -&gt; ...<br>LIGNE -&gt; ...<svg class="abs" style="left:182px;top:8px" width="9" height="6"><path d="M1 5 L4.5 1.4 L8 5" fill="none" stroke="#bfbfbf" stroke-width="1.4"/></svg><svg class="abs" style="left:182px;top:62px" width="9" height="6"><path d="M1 1 L4.5 4.6 L8 1" fill="none" stroke="#bfbfbf" stroke-width="1.4"/></svg></div>
<div class="ib" style="top:331px"><svg class="abs" style="left:0;top:0" width="20" height="17"><use href="#i-hand"/></svg></div>
<div class="ib" style="top:354px"><svg class="abs" style="left:0;top:0" width="20" height="17"><use href="#i-hand"/></svg></div>
<div class="abs" style="left:759px;top:376px;width:198px;height:24px;border:1px solid #7a7a7a;background:#fff"><svg class="abs" style="left:184px;top:4px" width="8" height="5"><path d="M1 4.2 L4 1.2 L7 4.2" fill="none" stroke="#c4c4c4" stroke-width="1.2"/></svg><svg class="abs" style="left:184px;top:13px" width="8" height="5"><path d="M1 .8 L4 3.8 L7 .8" fill="none" stroke="#c4c4c4" stroke-width="1.2"/></svg></div>
<div class="abs" style="left:759px;top:402px;width:10px;height:17px;background:#6464fa"></div>
<div class="abs" style="left:759px;top:405px;width:10px;height:10px;border:1px solid #333;background:#fff"><svg class="abs" style="left:0;top:0" width="8" height="8"><path d="M1.2 4.2 L3.2 6 L7 2" fill="none" stroke="#333" stroke-width="1.2"/></svg></div>
<div class="abs" style="left:759px;top:424px;width:10px;height:10px;border:1px solid #333;background:#fff"><svg class="abs" style="left:0;top:0" width="8" height="8"><path d="M1.2 4.2 L3.2 6 L7 2" fill="none" stroke="#333" stroke-width="1.2"/></svg></div>
<svg class="abs" style="left:450px;top:274px" width="18" height="24"><path d="M3.5 3.3 V19.6 L7.6 16.1 L10 21.7 L12.6 20.7 L10.3 15.1 H14.9 Z" fill="#fff" stroke="#16162a" stroke-width="1.1" stroke-linejoin="round"/></svg>
<div class="btn" style="left:635px;top:612px;width:54px">Validation</div>
<div class="btn d" style="left:696px;top:612px;width:54px">Sélection</div>
<div class="btn" style="left:757px;top:612px;width:54px">Abandon</div>
</div>
<div id="status" class="abs"><svg class="abs" style="left:963px;top:7px" width="14" height="12"><g fill="#fff" transform="translate(1 1)"><rect x="10" y="0" width="2" height="2"/><rect x="6" y="4" width="2" height="2"/><rect x="10" y="4" width="2" height="2"/><rect x="2" y="8" width="2" height="2"/><rect x="6" y="8" width="2" height="2"/><rect x="10" y="8" width="2" height="2"/></g><g fill="#7fa3dc"><rect x="10" y="0" width="2" height="2"/><rect x="6" y="4" width="2" height="2"/><rect x="10" y="4" width="2" height="2"/><rect x="2" y="8" width="2" height="2"/><rect x="6" y="8" width="2" height="2"/><rect x="10" y="8" width="2" height="2"/></g></svg></div>
</body>
</html>
